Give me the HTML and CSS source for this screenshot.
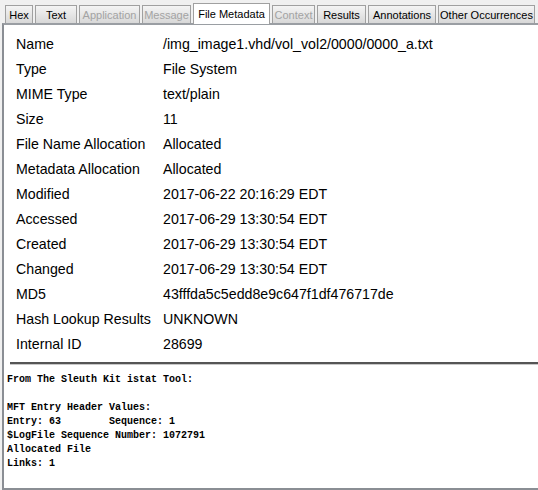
FILE: index.html
```html
<!DOCTYPE html>
<html>
<head>
<meta charset="utf-8">
<link rel="stylesheet" href="styles.css">
</head>
<body>
<div class="tabs">
  <div class="tab t-hex">Hex</div>
  <div class="tab t-text">Text</div>
  <div class="tab t-app disabled">Application</div>
  <div class="tab t-msg disabled">Message</div>
  <div class="tab t-meta active">File Metadata</div>
  <div class="tab t-ctx disabled">Context</div>
  <div class="tab t-res">Results</div>
  <div class="tab t-ann">Annotations</div>
  <div class="tab t-occ">Other Occurrences</div>
</div>
<div class="panel">
  <div class="meta">
    <div class="row"><span class="k">Name</span><span class="v">/img_image1.vhd/vol_vol2/0000/0000_a.txt</span></div>
    <div class="row"><span class="k">Type</span><span class="v">File System</span></div>
    <div class="row"><span class="k">MIME Type</span><span class="v">text/plain</span></div>
    <div class="row"><span class="k">Size</span><span class="v">11</span></div>
    <div class="row"><span class="k">File Name Allocation</span><span class="v">Allocated</span></div>
    <div class="row"><span class="k">Metadata Allocation</span><span class="v">Allocated</span></div>
    <div class="row"><span class="k">Modified</span><span class="v">2017-06-22 20:16:29 EDT</span></div>
    <div class="row"><span class="k">Accessed</span><span class="v">2017-06-29 13:30:54 EDT</span></div>
    <div class="row"><span class="k">Created</span><span class="v">2017-06-29 13:30:54 EDT</span></div>
    <div class="row"><span class="k">Changed</span><span class="v">2017-06-29 13:30:54 EDT</span></div>
    <div class="row"><span class="k">MD5</span><span class="v">43fffda5c5edd8e9c647f1df476717de</span></div>
    <div class="row"><span class="k">Hash Lookup Results</span><span class="v">UNKNOWN</span></div>
    <div class="row"><span class="k">Internal ID</span><span class="v">28699</span></div>
  </div>
  <div class="sep"></div>
  <pre class="istat">From The Sleuth Kit istat Tool:

MFT Entry Header Values:
Entry: 63        Sequence: 1
$LogFile Sequence Number: 1072791
Allocated File
Links: 1</pre>
</div>
</body>
</html>
```
FILE: styles.css
```css
html, body {
  margin: 0;
  padding: 0;
  background: #f0f0f0;
  width: 538px;
  height: 490px;
  overflow: hidden;
}
body {
  font-family: "Liberation Sans", Arial, sans-serif;
}
.tabs {
  display: flex;
  align-items: flex-end;
  gap: 2px;
  padding: 3px 0 0 5px;
  height: 23px;
  box-sizing: border-box;
  position: relative;
  z-index: 1;
}
.tab {
  height: 18px;
  box-sizing: border-box;
  border: 1px solid #a0a0a0;
  border-bottom: none;
  background: linear-gradient(#f4f4f4, #d8d8d8);
  font-size: 11px;
  color: #000;
  padding-top: 3px;
  line-height: 13px;
  white-space: nowrap;
  text-align: center;
  flex: none;
}
.t-hex { width: 28px; }
.t-text { width: 42px; }
.t-app { width: 61px; }
.t-msg { width: 49px; }
.t-meta { width: 77px; }
.t-ctx { width: 43px; }
.t-res { width: 49px; }
.t-ann { width: 68px; }
.t-occ { width: 97px; }
.tab.disabled {
  color: #a3a3a3;
}
.tab.active {
  height: 21px;
  background: #fff;
  padding-top: 4px;
  margin-bottom: -1px;
}
.panel {
  margin: 0 0 0 2px;
  height: 467px;
  box-sizing: border-box;
  background: #fff;
  border-top: 2px solid #9a9ea3;
  border-left: 2px solid #8a8e94;
  border-bottom: 2px solid #8a8e94;
}
.meta {
  padding: 6px 0 0 12px;
}
.row {
  display: flex;
  height: 25px;
  align-items: center;
  font-size: 14.2px;
  color: #000;
}
.k {
  width: 147px;
  flex: none;
}
.sep {
  margin: 6px 0 0 6px;
  height: 2px;
  background: #555;
  border-bottom: 1px solid #c8c8c8;
}
.istat {
  margin: 8px 0 0 3px;
  font-family: "Liberation Mono", "Courier New", monospace;
  font-weight: bold;
  font-size: 10px;
  line-height: 14px;
  color: #000;
}
```
